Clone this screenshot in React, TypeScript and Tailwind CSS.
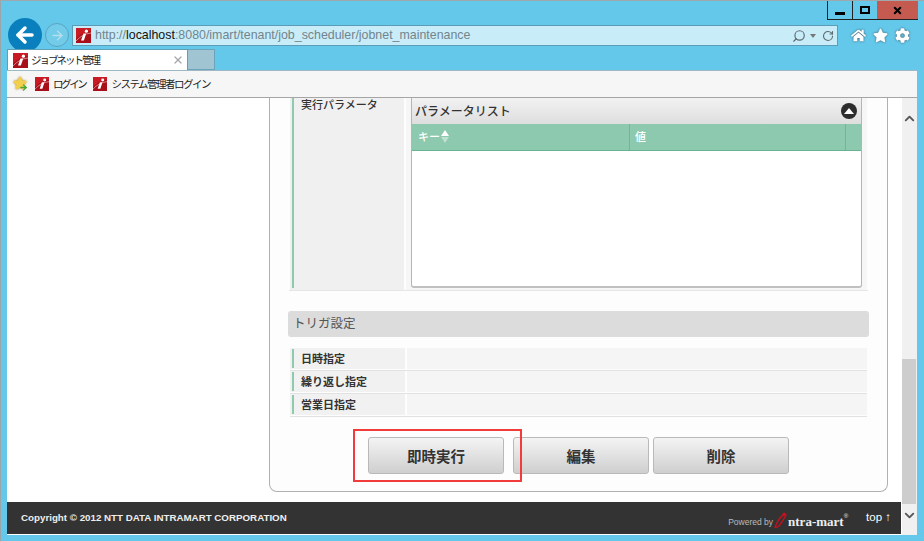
import React from "react";
import { Search, RotateCw, ChevronDown, ChevronUp, ArrowLeft, ArrowRight, X } from "lucide-react";
import { FaHome, FaStar, FaCog } from "react-icons/fa";

const jp = "font-['Noto_Sans_CJK_JP','Noto_Sans_CJK_SC',sans-serif]";

function Logo({ size = 15 }: { size?: number }) {
  return (
    <svg width={size} height={size} viewBox="0 0 15 15" className="shrink-0">
      <rect width="15" height="15" fill="#a80f18" />
      <path d="M0 0 H15 V3 Q6 4 0 11Z" fill="#c91b24" />
      <path d="M0 13 Q6 6 15 5" fill="none" stroke="#e9a0a4" strokeWidth="0.8" />
      <path d="M7.4 5.6 L10.2 5.6 L7.9 12.6 L5 12.6Z" fill="#fff" />
      <circle cx="10.4" cy="3.2" r="1.6" fill="#fff" />
    </svg>
  );
}

function TriggerRow({ label }: { label: string }) {
  return (
    <div className="flex h-[23px] border-b border-[#e2e2e2] bg-[#fdfdfe]">
      <div className="mb-px mr-[2px] flex w-[115px] items-center bg-[#f1f1f1]">
        <div className="ml-[2px] h-[19px] w-[2px] bg-[#8fc9ae]" />
        <span className={`ml-[7px] text-[11px] font-bold text-[#333] ${jp}`}>{label}</span>
      </div>
      <div className="mb-px flex-1 bg-[#f5f5f5]" />
    </div>
  );
}

function ActionButton({ label }: { label: string }) {
  return (
    <button className={`h-[37px] w-[136px] rounded-[3px] border border-[#b9b9b9] bg-gradient-to-b from-[#f4f4f4] to-[#cfcfcf] text-[14.5px] font-bold text-[#333] ${jp}`}>
      {label}
    </button>
  );
}

export default function App() {
  return (
    <div className="relative flex h-[541px] w-[924px] flex-col overflow-hidden border-t border-[#a0a8ac] bg-[#63c8ea] shadow-[inset_1px_0_0_#9aa5aa] font-['Liberation_Sans',sans-serif]">
      {/* window controls */}
      <div className="absolute right-[6px] top-0 flex h-[19px] border-b border-l border-[#222]">
        <div className="flex w-[25px] items-center justify-center border-r border-[#222]"><div className="mt-[6px] h-[3px] w-[10px] bg-black" /></div>
        <div className="flex w-[24px] items-center justify-center"><div className="mb-px h-[8px] w-[10px] border-2 border-black" /></div>
        <div className="flex w-[41px] items-center justify-center bg-[#c45a50]"><X size={11} strokeWidth={4.5} className="text-black" /></div>
      </div>

      {/* address row */}
      <div className="flex h-[48px] items-end pl-[8px]">
        <div className="mb-[-3px] flex h-[34px] w-[34px] items-center justify-center rounded-full bg-[#0a7fbd]">
          <ArrowLeft size={24} strokeWidth={3.5} className="text-white" />
        </div>
        <div className="mb-[2px] ml-[3px] flex h-[24px] w-[24px] items-center justify-center rounded-full border border-[#5aa3c0] bg-[#72cce9]">
          <ArrowRight size={15} strokeWidth={2.2} className="text-[#b7dfea]" />
        </div>
        <div className="mb-[3px] ml-[3px] flex h-[21px] w-[766px] items-center border border-[#5c9cb6] bg-[#c9edf8] pl-[3px]">
          <Logo size={15} />
          <span className="ml-[4px] text-[12.4px] text-[#72848d]">http://<span className="text-[#111]">localhost</span>:8080/imart/tenant/job_scheduler/jobnet_maintenance</span>
          <div className="ml-auto mr-[3px] flex items-center text-[#5d6a70]">
            <Search size={14} strokeWidth={2} className="-scale-x-100" />
            <span className="ml-[4px] h-0 w-0 border-x-[3px] border-t-[4px] border-x-transparent border-t-[#777]" />
            <RotateCw size={12} strokeWidth={2.2} className="ml-[6px]" />
          </div>
        </div>
        <div className="mb-[6px] ml-[13px] flex items-center gap-[7px] text-white">
          <FaHome size={15} className="drop-shadow-[0_0_1px_#456]" />
          <FaStar size={15} className="drop-shadow-[0_0_1px_#456]" />
          <FaCog size={15} className="drop-shadow-[0_0_1px_#456]" />
        </div>
      </div>

      {/* tabs */}
      <div className="flex h-[21px] pl-[7px]">
        <div className="flex w-[181px] items-center border border-b-0 border-[#5fa0b8] bg-white pl-[5px] pr-[3px]">
          <Logo size={15} />
          <span className={`ml-[3px] text-[10.5px] tracking-[-2px] text-[#222] ${jp}`}>ジョブネット管理</span>
          <X size={12} strokeWidth={2.5} className="ml-auto text-[#a6a6a6]" />
        </div>
        <div className="h-[21px] w-[27px] border border-l-0 border-[#6aa5bb] bg-[#a1c4d3]" />
      </div>

      {/* favorites */}
      <div className="mx-[7px] flex h-[28px] items-center border-b border-t border-b-[#a5a5a5] border-t-[#9fb9c4] bg-[#f6f6f6] pl-[6px]">
        <div className="relative h-[16px] w-[14px]">
          <FaStar size={14} className="text-[#f2cf4c] drop-shadow-[0_0_1px_#b07f10]" />
          <ArrowRight size={9} strokeWidth={3.5} className="absolute bottom-0 right-[-1px] text-[#46a82f]" />
        </div>
        <div className="ml-[8px]"><Logo size={14} /></div>
        <span className={`ml-[4px] text-[10.5px] tracking-[-2.4px] text-[#222] ${jp}`}>ログイン</span>
        <div className="ml-[8px]"><Logo size={14} /></div>
        <span className={`ml-[4px] text-[10.5px] tracking-[-1.5px] text-[#222] ${jp}`}>システム管理者ログイン</span>
      </div>

      {/* viewport */}
      <div className="mx-[7px] mb-[6px] flex flex-1 overflow-hidden">
        <div className="flex min-w-0 flex-1 flex-col bg-white">
          <div className="flex h-[404px] justify-end overflow-hidden pr-[14px]">
            <main className="flex h-[394px] w-[619px] flex-col rounded-b-[8px] border border-t-0 border-[#b0b0b0] bg-[#fdfdfe] px-[19px]">
              {/* parameter row */}
              <div className="flex h-[193px] shrink-0 border-b border-[#e6e6e6] pl-[1px] pr-[1px]">
                <div className="flex w-[114px] bg-[#f0f0f0]">
                  <div className="ml-[2px] h-[190px] w-[2px] bg-[#8fc9ae]" />
                  <span className={`ml-[7px] mt-[-2px] text-[11px] font-medium text-[#333] ${jp}`}>実行パラメータ</span>
                </div>
                <div className="ml-[2px] flex-1 bg-[#f6f6f6] pl-[5px]">
                  <div className="flex h-[190px] w-[451px] flex-col rounded-b-[3px] border-x border-b-2 border-[#c0c0c0] border-x-[#b5b5b5] bg-white">
                    <div className="flex h-[26px] shrink-0 items-center bg-gradient-to-b from-[#f2f2f2] to-[#dedede] pl-[3px] pr-[4px]">
                      <span className={`text-[12px] font-medium text-[#333] ${jp}`}>パラメータリスト</span>
                      <div className="ml-auto flex h-[16px] w-[16px] items-center justify-center rounded-full bg-[#2d2d2d]">
                        <span className="mb-px h-0 w-0 border-x-[5px] border-b-[6px] border-x-transparent border-b-white" />
                      </div>
                    </div>
                    <div className="flex h-[27px] shrink-0 border-b border-[#68b392] bg-[#8cc9ae] text-white">
                      <div className={`flex w-[218px] items-center border-r border-[#74b598] pb-[2px] pl-[6px] text-[11px] font-medium ${jp}`}>
                        キー
                        <span className="ml-[1px] flex flex-col gap-[1px]">
                          <span className="h-0 w-0 border-x-[4px] border-b-[6px] border-x-transparent border-b-white" />
                          <span className="h-0 w-0 border-x-[4px] border-t-[6px] border-x-transparent border-t-[#bfe0d1]" />
                        </span>
                      </div>
                      <div className={`flex w-[216px] items-center border-r border-[#74b598] pb-[2px] pl-[5px] text-[11px] font-medium ${jp}`}>値</div>
                    </div>
                  </div>
                </div>
              </div>

              {/* section heading */}
              <div className="ml-[-1px] mr-[-1px] mt-[20px] flex h-[26px] shrink-0 items-center rounded-[3px] bg-[#dcdcdc] pb-[2px] pl-[5px]">
                <span className={`text-[12.5px] text-[#555] ${jp}`}>トリガ設定</span>
              </div>

              {/* trigger rows */}
              <div className="mt-[11px] px-[1px]">
                <TriggerRow label="日時指定" />
                <TriggerRow label="繰り返し指定" />
                <TriggerRow label="営業日指定" />
              </div>

              {/* actions */}
              <div className="relative mt-[20px] flex pl-[79px]">
                <ActionButton label="即時実行" />
                <div className="ml-[9px]"><ActionButton label="編集" /></div>
                <div className="ml-[4px]"><ActionButton label="削除" /></div>
                <div className="absolute left-[64px] top-[-8px] h-[53px] w-[169px] border-[2px] border-[#f23c3c]" />
              </div>
            </main>
          </div>
          {/* footer */}
          <footer className="mr-px flex h-[32px] items-center bg-[#333] pl-[14px] pr-[10px] text-white">
            <span className="text-[9.75px] font-bold text-[#eee]">Copyright © 2012 NTT DATA INTRAMART CORPORATION</span>
            <span className="ml-auto mt-[9px] text-[8.5px] text-[#bbb]">Powered by</span>
            <svg width="14" height="16" viewBox="0 0 14 16" className="ml-px mt-[3px]">
              <path d="M1 15 Q7 1 12 3 Q9 9 5 14 Q2 16 1 15Z" fill="none" stroke="#c8101e" strokeWidth="1.4" />
              <circle cx="10" cy="2" r="1.6" fill="#c8101e" />
            </svg>
            <span className="mt-[6px] font-['Liberation_Serif',serif] text-[13px] font-bold leading-none text-[#eee]">ntra-mart</span>
            <span className="mb-[4px] text-[6px] leading-none text-[#eee]">®</span>
            <span className="ml-[18px] text-[11.5px] text-white">top ↑</span>
          </footer>
        </div>
        {/* scrollbar */}
        <div className="flex w-[15px] flex-col bg-[#f0f0f0]">
          <div className="flex h-[261px] justify-center pt-[13px]">
            <ChevronUp size={15} strokeWidth={3} className="text-[#555]" />
          </div>
          <div className="h-[145px] w-[14px] bg-[#cdcdcd]" />
          <div className="flex flex-1 justify-center pt-[4px]">
            <ChevronDown size={15} strokeWidth={3} className="text-[#555]" />
          </div>
        </div>
      </div>
    </div>
  );
}
